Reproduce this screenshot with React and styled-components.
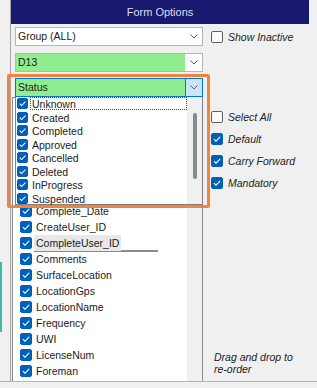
import React from "react";
import styled, { createGlobalStyle } from "styled-components";

const GlobalStyle = createGlobalStyle`
  html, body {
    margin: 0;
    padding: 0;
    background: #f0f0f0;
  }
  body {
    font-family: "Liberation Sans", Arial, sans-serif;
    color: #1b1b1b;
  }
`;

const statuses = [
  "Unknown",
  "Created",
  "Completed",
  "Approved",
  "Cancelled",
  "Deleted",
  "InProgress",
  "Suspended",
];

const fields = [
  "Complete_Date",
  "CreateUser_ID",
  "CompleteUser_ID",
  "Comments",
  "SurfaceLocation",
  "LocationGps",
  "LocationName",
  "Frequency",
  "UWI",
  "LicenseNum",
  "Foreman",
];

const options = [
  { label: "Select All", checked: false },
  { label: "Default", checked: true },
  { label: "Carry Forward", checked: true },
  { label: "Mandatory", checked: true },
];

const Chevron = () => (
  <svg width="8" height="5" viewBox="0 0 8 5">
    <path d="M0.5 0.5 L4 4 L7.5 0.5" fill="none" stroke="#5c5c5c" strokeWidth="1" />
  </svg>
);

const Check = ({ checked, size = 12 }) => (
  <Box $checked={checked} $size={size}>
    {checked && (
      <svg width={size} height={size} viewBox="0 0 12 12">
        <path d="M2.9 6.1 L5 8.2 L9.2 3.9" fill="none" stroke="#fff" strokeWidth="1.1" />
      </svg>
    )}
  </Box>
);

const App = () => {
  return (
    <>
      <GlobalStyle />
      <Window>
        <LeftStrip>
          <TealMark />
        </LeftStrip>
        <Panel>
          <Header>Form Options</Header>
          <Body>
            <LeftCol>
              <ComboStack>
                <Combo>
                  <ComboText>Group (ALL)</ComboText>
                  <ChevronBox>
                    <Chevron />
                  </ChevronBox>
                </Combo>
                <Combo>
                  <ComboText $fill="#90ee90">D13</ComboText>
                  <ChevronBox>
                    <Chevron />
                  </ChevronBox>
                </Combo>
                <StatusWrap>
                  <Combo $focused>
                    <ComboText $fill="#90ee90">Status</ComboText>
                    <ChevronBox $active>
                      <Chevron />
                    </ChevronBox>
                  </Combo>
                  <Dropdown>
                    <DropItems>
                      {statuses.map((s, i) => (
                        <DropRow key={s}>
                          <Check checked size={11} />
                          <DropLabel $focused={i === 0}>{s}</DropLabel>
                        </DropRow>
                      ))}
                    </DropItems>
                    <Track>
                      <Thumb />
                    </Track>
                  </Dropdown>
                </StatusWrap>
              </ComboStack>
              <MainList>
                <ListArea>
                  {fields.map((f) => (
                    <React.Fragment key={f}>
                      <Row>
                        <Check checked />
                        <RowLabel $hover={f === "CompleteUser_ID"}>{f}</RowLabel>
                      </Row>
                      {f === "CompleteUser_ID" && <DropLine />}
                    </React.Fragment>
                  ))}
                  {/* next row, scrolled mostly out of view */}
                  <Row>
                    <Check checked />
                  </Row>
                </ListArea>
                <ListTrack />
              </MainList>
            </LeftCol>
            <RightCol>
              <OptRow>
                <Check checked={false} />
                <OptLabel>Show Inactive</OptLabel>
              </OptRow>
              <OptGroup>
                {options.map((o) => (
                  <OptRow key={o.label} $tall>
                    <Check checked={o.checked} />
                    <OptLabel>{o.label}</OptLabel>
                  </OptRow>
                ))}
              </OptGroup>
              <Note>Drag and drop to re-order</Note>
            </RightCol>
          </Body>
        </Panel>
        <Highlight />
      </Window>
    </>
  );
};

export default App;

const Window = styled.div`
  position: relative;
  display: flex;
  width: 317px;
  height: 381px;
  border-bottom: 1px solid #b4b4b4;
  background: #f0f0f0;
  overflow: hidden;
`;

const LeftStrip = styled.div`
  width: 10px;
  border-right: 1px solid #a6a6a6;
  flex-shrink: 0;
`;

const TealMark = styled.div`
  width: 2px;
  height: 70px;
  margin-top: 262px;
  background: #3fb9a6;
`;

const Panel = styled.div`
  width: 298px;
  flex-shrink: 0;
  display: flex;
  flex-direction: column;
  min-height: 0;
`;

const Header = styled.div`
  height: 24px;
  flex-shrink: 0;
  background: #191970;
  color: #dcdcf2;
  font-size: 11px;
  display: flex;
  align-items: center;
  justify-content: center;
`;

const Body = styled.div`
  flex: 1;
  display: flex;
  padding-top: 3px;
  min-height: 0;
`;

const LeftCol = styled.div`
  width: 192px;
  display: flex;
  flex-direction: column;
  min-height: 0;
`;

const ComboStack = styled.div`
  display: flex;
  flex-direction: column;
  gap: 7px;
  padding-left: 4px;
`;

const Combo = styled.div`
  width: 188px;
  height: 19px;
  box-sizing: border-box;
  border: 1px solid ${(p) => (p.$focused ? "#0078d7" : "#b5b5b5")};
  background: #fff;
  display: flex;
`;

const ComboText = styled.div`
  flex: 1;
  background: ${(p) => p.$fill || "#fff"};
  font-size: 10.5px;
  line-height: 17px;
  padding-left: 2px;
`;

const ChevronBox = styled.div`
  width: 16px;
  display: flex;
  align-items: center;
  justify-content: center;
  background: ${(p) => (p.$active ? "#cce4f7" : "#fff")};
  border-left: 1px solid ${(p) => (p.$active ? "#0078d7" : "#fff")};
`;

const StatusWrap = styled.div`
  position: relative;
  margin-top: -1px;
  z-index: 2;
`;

const Dropdown = styled.div`
  position: absolute;
  top: 100%;
  left: 0;
  width: 188px;
  height: 108px;
  box-sizing: border-box;
  border: 1px solid #7f7f7f;
  border-top: none;
  background: #fff;
  display: flex;
`;

const DropItems = styled.div`
  flex: 1;
  padding-left: 1px;
`;

const DropRow = styled.div`
  height: 13.5px;
  display: flex;
  align-items: center;
  gap: 2px;
`;

const DropLabel = styled.div`
  flex: 1;
  height: 13px;
  box-sizing: border-box;
  padding-left: 1px;
  font-size: 10.5px;
  line-height: 12px;
  border: 1px dotted ${(p) => (p.$focused ? "#444" : "transparent")};
`;

const Track = styled.div`
  width: 15px;
  background: #f0f0f0;
  padding-top: 16px;
  box-sizing: border-box;
`;

const Thumb = styled.div`
  width: 4px;
  height: 66px;
  margin-left: 6px;
  border-radius: 2px;
  background: #8a8a8a;
`;

const Box = styled.span`
  width: ${(p) => p.$size}px;
  height: ${(p) => p.$size}px;
  box-sizing: border-box;
  flex-shrink: 0;
  border-radius: 2px;
  border: 1px solid ${(p) => (p.$checked ? "#005fb8" : "#5f5f5f")};
  background: ${(p) => (p.$checked ? "#005fb8" : "#fbfbfb")};
  display: flex;
  align-items: center;
  justify-content: center;
  svg {
    flex-shrink: 0;
  }
`;

const MainList = styled.div`
  flex: 1;
  margin-left: 1px;
  display: flex;
  border: 1px solid #8c8c8c;
  border-bottom: none;
  min-height: 0;
  overflow: hidden;
`;

const ListArea = styled.div`
  flex: 1;
  background: #fff;
  padding-top: 105px;
`;

const ListTrack = styled.div`
  width: 15px;
  background: #f0f0f0;
`;

const Row = styled.div`
  height: 16px;
  display: flex;
  align-items: center;
  padding-left: 7px;
  gap: 2px;
`;

const RowLabel = styled.span`
  font-size: 10.5px;
  line-height: 16px;
  padding: 0 2px;
  background: ${(p) => (p.$hover ? "#e8e8e8" : "transparent")};
`;

const DropLine = styled.div`
  width: 124px;
  height: 2px;
  margin: -1px 0 -1px 21px;
  background: #8a8a8a;
`;

const RightCol = styled.div`
  flex: 1;
  display: flex;
  flex-direction: column;
  padding: 0 0 6px 8px;
`;

const OptRow = styled.div`
  height: ${(p) => (p.$tall ? 22 : 19)}px;
  display: flex;
  align-items: center;
  gap: 5px;
`;

const OptGroup = styled.div`
  margin-top: 60px;
  display: flex;
  flex-direction: column;
`;

const OptLabel = styled.span`
  font-size: 10.5px;
  font-style: italic;
  color: #222;
`;

const Note = styled.div`
  margin-top: auto;
  width: 92px;
  padding-left: 3px;
  font-size: 10.5px;
  font-style: italic;
  line-height: 12px;
  color: #222;
`;

const Highlight = styled.div`
  position: absolute;
  left: 7px;
  top: 74px;
  width: 203px;
  height: 134px;
  box-sizing: border-box;
  border: 3px solid #f5823c;
  border-radius: 2px;
  pointer-events: none;
  z-index: 3;
`;
